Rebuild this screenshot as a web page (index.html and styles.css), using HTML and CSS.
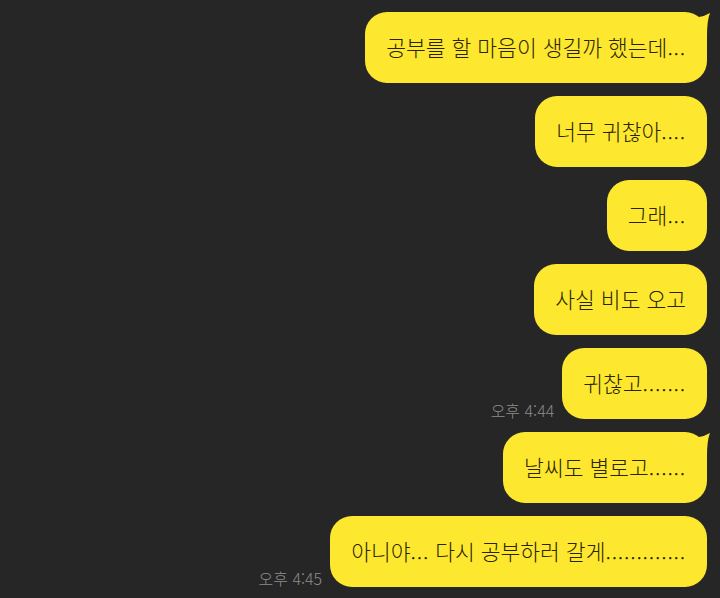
FILE: index.html
```html
<!DOCTYPE html>
<html lang="ko">

<head>
    <meta charset="UTF-8">
    <meta name="viewport" content="width=device-width, initial-scale=1.0">
    <title>채팅</title>
    <link rel="stylesheet" href="styles.css">
</head>

<body>

    <div class="chat">
        <!-- 첫 메시지 (꼬리 있음) -->
        <div class="row">
            <div class="bubble">공부를 할 마음이 생길까 했는데<span class="dots">...</span>
                <svg class="tail-mark" width="12" height="24" viewBox="0 0 12 24"><path d="M0 5 Q6 4 11 1 Q8 8 8 24 L0 24 Z" fill="#fde82f"/></svg>
            </div>
        </div>
        <div class="row">
            <div class="bubble">너무 귀찮아<span class="dots">....</span></div>
        </div>
        <div class="row">
            <div class="bubble">그래<span class="dots">...</span></div>
        </div>
        <div class="row">
            <div class="bubble">사실 비도 오고</div>
        </div>
        <div class="row">
            <span class="time">오후 4:44</span>
            <div class="bubble">귀찮고<span class="dots">.......</span></div>
        </div>

        <div class="row">
            <div class="bubble">날씨도 별로고<span class="dots">......</span>
                <svg class="tail-mark" width="12" height="24" viewBox="0 0 12 24"><path d="M0 5 Q6 4 11 1 Q8 8 8 24 L0 24 Z" fill="#fde82f"/></svg>
            </div>
        </div>
        <div class="row">
            <span class="time">오후 4:45</span>
            <div class="bubble">아니야<span class="dots">...</span> 다시 공부하러 갈게<span class="dots">.............</span></div>
        </div>
    </div>

</body>

</html>
```
FILE: styles.css
```css
* {
    margin: 0;
    padding: 0;
    box-sizing: border-box;
}

body {
    background-color: #262626;
    font-family: 'Noto Sans CJK KR', 'Liberation Serif', serif;
    width: 720px;
    height: 598px;
    overflow: hidden;
}

.chat {
    display: flex;
    flex-direction: column;
    align-items: flex-end;
    gap: 13px;
    padding: 12px 13px 0 0;
}

.row {
    display: flex;
    align-items: flex-end;
    gap: 8px;
}

.bubble {
    position: relative;
    background: #fde82f;
    color: #2a2400;
    font-size: 21.5px;
    font-weight: 300;
    line-height: 26px;
    padding: 22px 21px 23px 21px;
    border-radius: 22px;
    white-space: nowrap;
}

.dots {
    letter-spacing: 0.8px;
}

.tail-mark {
    position: absolute;
    top: 0;
    right: -4px;
}

.time {
    color: #8c8c8c;
    font-size: 16px;
    font-weight: 300;
    line-height: 18px;
    white-space: nowrap;
}
```
